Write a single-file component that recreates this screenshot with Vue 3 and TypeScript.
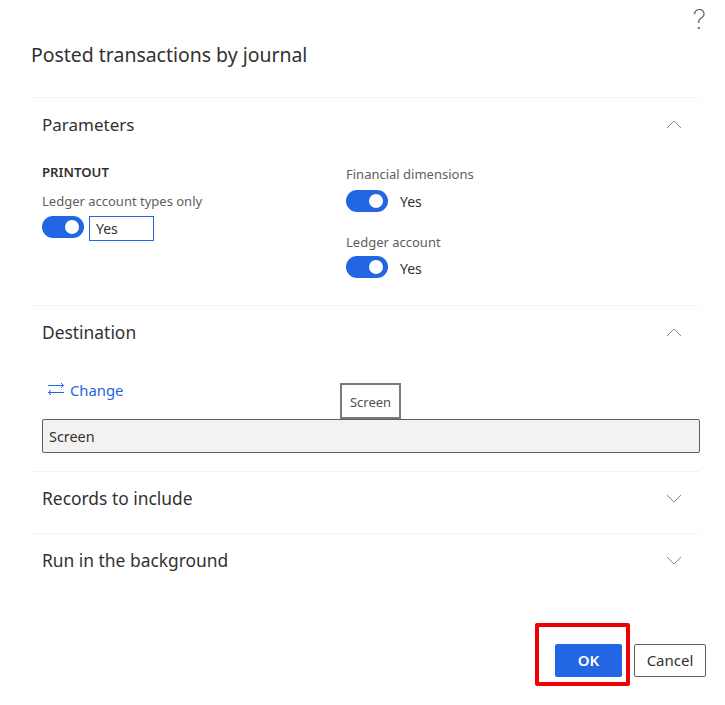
<script setup lang="ts">
import { ref } from 'vue'

const printoutOn = ref(true)
const dimensionsOn = ref(true)
const ledgerOn = ref(true)
</script>

<template>
  <div class="dialog">
    <div class="help-row">
      <span class="help">?</span>
    </div>
    <h1 class="title">Posted transactions by journal</h1>

    <section class="section section--params">
      <div class="section__head">
        <h2>Parameters</h2>
        <svg class="chevron chevron--up" width="16" height="9" viewBox="0 0 16 9"><path d="M1 8 L8 1 L15 8" /></svg>
      </div>
      <div class="params">
        <div class="params__col">
          <div class="group-title">PRINTOUT</div>
          <label class="field-label field-label--first">Ledger account types only</label>
          <div class="toggle-row">
            <button class="toggle" :class="{ on: printoutOn }" @click="printoutOn = !printoutOn"><span /></button>
            <input class="yes-input" value="Yes" />
          </div>
        </div>
        <div class="params__col params__col--right">
          <label class="field-label">Financial dimensions</label>
          <div class="toggle-row toggle-row--plain">
            <button class="toggle" :class="{ on: dimensionsOn }" @click="dimensionsOn = !dimensionsOn"><span /></button>
            <span class="yes-text">Yes</span>
          </div>
          <label class="field-label field-label--second">Ledger account</label>
          <div class="toggle-row toggle-row--plain toggle-row--last">
            <button class="toggle" :class="{ on: ledgerOn }" @click="ledgerOn = !ledgerOn"><span /></button>
            <span class="yes-text">Yes</span>
          </div>
        </div>
      </div>
    </section>

    <section class="section section--dest">
      <div class="section__head">
        <h2>Destination</h2>
        <svg class="chevron chevron--up" width="16" height="9" viewBox="0 0 16 9"><path d="M1 8 L8 1 L15 8" /></svg>
      </div>
      <button class="change">
        <svg width="16" height="12" viewBox="0 0 16 12">
          <path d="M0 2.5 H15.5 M13 0 L15.5 2.5 L13 5 M16 9.5 H0.5 M3 7 L0.5 9.5 L3 12" />
        </svg>
        Change
      </button>
      <div class="screen-field">Screen</div>
      <div class="tooltip">Screen</div>
    </section>

    <section class="section section--collapsed">
      <div class="section__head">
        <h2>Records to include</h2>
        <svg class="chevron" width="16" height="9" viewBox="0 0 16 9"><path d="M1 1 L8 8 L15 1" /></svg>
      </div>
    </section>

    <section class="section section--collapsed">
      <div class="section__head">
        <h2>Run in the background</h2>
        <svg class="chevron" width="16" height="9" viewBox="0 0 16 9"><path d="M1 1 L8 8 L15 1" /></svg>
      </div>
    </section>

    <div class="footer">
      <button class="btn btn--ok">OK</button>
      <button class="btn btn--cancel">Cancel</button>
      <div class="highlight" />
    </div>
  </div>
</template>

<style>
html,
body {
  margin: 0;
  background: #fff;
}
</style>

<style scoped>
.dialog {
  width: 725px;
  height: 705px;
  box-sizing: border-box;
  padding: 0 26px 0 31px;
  font-family: "Noto Sans", "Open Sans", sans-serif;
  color: #323130;
  overflow: hidden;
}

.help-row {
  display: flex;
  justify-content: flex-end;
  height: 41px;
}

.help {
  font-family: Inter, "Liberation Sans", sans-serif;
  font-size: 27px;
  font-weight: 200;
  line-height: 40px;
  color: #605e5c;
  margin-right: -7px;
}

.title {
  margin: 0;
  height: 56px;
  font-size: 19.45px;
  font-weight: 400;
  line-height: 28px;
}

/* sections */
.section {
  position: relative;
  border-top: 1px solid #f3f2f1;
  box-sizing: border-box;
}

.section--params {
  height: 208px;
}

.section--params h2 {
  font-size: 17px;
}

.section--dest {
  height: 166px;
}

.section--collapsed {
  height: 62px;
}

.section--collapsed .section__head {
  height: 53px;
}

.section__head {
  display: flex;
  align-items: center;
  justify-content: space-between;
  height: 54px;
  padding: 0 17px 0 11px;
}

.section__head h2 {
  margin: 0;
  font-weight: 400;
  line-height: 24px;
}

.section--dest h2,
.section--collapsed h2 {
  margin-top: -2px;
  font-size: 17.4px;
}

.chevron {
  fill: none;
  stroke: #8a8886;
  stroke-width: 1;
}

.chevron--up {
  margin-top: -2px;
}

/* parameters */
.params {
  display: grid;
  grid-template-columns: 304px 1fr;
  padding: 10px 0 0 11px;
}

.group-title {
  font-size: 13.2px;
  font-weight: 600;
  line-height: 20px;
  height: 20px;
}

.field-label {
  display: block;
  font-size: 13px;
  line-height: 18px;
  color: #605e5c;
}

.field-label--first {
  margin-top: 10px;
}

.field-label--second {
  margin-top: 21px;
}

.params__col--right {
  padding-top: 3px;
}

.toggle-row {
  display: flex;
  align-items: flex-start;
  gap: 5px;
  margin-top: 6px;
}

.toggle-row--plain {
  gap: 12px;
  margin-top: 7px;
}

.toggle-row--last {
  margin-top: 5px;
}

.toggle-row--last .yes-text {
  margin-top: 3px;
}

.toggle {
  position: relative;
  width: 42px;
  height: 22px;
  padding: 0;
  border: none;
  border-radius: 11px;
  background: #c8c6c4;
}

.toggle.on {
  background: #2266e3;
}

.toggle span {
  position: absolute;
  top: 4px;
  left: 5px;
  width: 14px;
  height: 14px;
  border-radius: 50%;
  background: #fff;
}

.toggle.on span {
  left: auto;
  right: 5px;
}

.yes-input {
  width: 65px;
  height: 25px;
  box-sizing: border-box;
  padding: 0 6px;
  border: 1px solid #2266e3;
  border-radius: 0;
  outline: none;
  font: inherit;
  font-size: 14px;
  color: #323130;
}

.yes-text {
  margin-top: 2px;
  font-size: 14px;
  line-height: 20px;
}

/* destination */
.change {
  display: flex;
  align-items: center;
  gap: 6px;
  height: 28px;
  margin: 16px 0 0 17px;
  padding: 0;
  border: none;
  background: none;
  font: inherit;
  font-size: 14.8px;
  color: #2266e3;
}

.change svg {
  margin-top: -2px;
  fill: none;
  stroke: #2266e3;
  stroke-width: 1;
}

.screen-field {
  box-sizing: border-box;
  height: 34px;
  margin: 15px -1px 0 11px;
  padding: 0 6px;
  border: 1px solid #605e5c;
  border-radius: 2px;
  background: #f3f2f1;
  font-size: 14.4px;
  line-height: 33px;
}

.tooltip {
  position: absolute;
  left: 309px;
  top: 77px;
  box-sizing: border-box;
  width: 61px;
  height: 36px;
  border: 2px solid #7a7a7a;
  background: #fff;
  font-size: 13px;
  line-height: 34px;
  text-align: center;
  color: #4f4e4d;
}

/* footer */
.footer {
  position: relative;
  display: flex;
  justify-content: flex-end;
  gap: 12px;
  margin: 49px -7px 0 0;
}

.btn {
  box-sizing: border-box;
  height: 33px;
  padding-bottom: 2px;
  border-radius: 2px;
  font: inherit;
  font-size: 15px;
}

.btn--ok {
  width: 67px;
  border: none;
  background: #2266e3;
  color: #fff;
  font-weight: 600;
}

.btn--cancel {
  width: 72px;
  border: 1px solid #605e5c;
  background: #fff;
  color: #323130;
}

.highlight {
  position: absolute;
  right: 76px;
  top: -21px;
  width: 95px;
  height: 63px;
  box-sizing: border-box;
  border: 4px solid #f00000;
  border-radius: 2px;
}
</style>
